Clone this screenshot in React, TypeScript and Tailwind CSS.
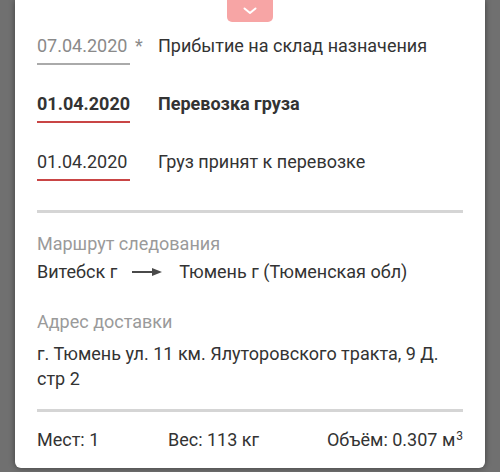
import React from 'react';

const events = [
  { date: '07.04.2020', mark: '*', title: 'Прибытие на склад назначения', state: 'pending' },
  { date: '01.04.2020', mark: '', title: 'Перевозка груза', state: 'current' },
  { date: '01.04.2020', mark: '', title: 'Груз принят к перевозке', state: 'done' },
];

function Arrow() {
  return (
    <svg width="30" height="10" viewBox="0 0 30 10" className="ml-[15px] mr-[17px]">
      <line x1="0" y1="5" x2="22" y2="5" stroke="#4a4a4a" strokeWidth="2" />
      <path d="M20 1 L30 5 L20 9 Z" fill="#4a4a4a" />
    </svg>
  );
}

export default function App() {
  return (
    <div
      className="w-[500px] h-[472px] overflow-hidden bg-[#707070] flex justify-center"
      style={{ fontFamily: 'Roboto, "Noto Sans", sans-serif' }}
    >
      <div className="w-[470px] h-[468px] bg-white rounded-b-[6px] shadow-[0_0_6px_rgba(0,0,0,0.45)] relative px-[22px] text-[#333] text-[18px] leading-[24px]">
        <button className="absolute left-[212px] top-0 w-[46px] h-[22px] bg-[#f7a5a5] rounded-b-[5px] flex items-center justify-center">
          <svg width="14" height="8" viewBox="0 0 14 8">
            <path d="M1.5 1.5 L7 6 L12.5 1.5" fill="none" stroke="white" strokeWidth="2" strokeLinecap="round" strokeLinejoin="round" />
          </svg>
        </button>

        <div className="pt-[34px] flex flex-col gap-[27px]">
          {events.map((e, i) => (
            <div key={i} className="flex items-start">
              <div className="w-[121px] shrink-0 flex items-start">
                <span
                  className={
                    'inline-block w-[93px] whitespace-nowrap pb-[5px] border-b-2 ' +
                    (e.state === 'pending'
                      ? 'text-[#8a8a8a] border-[#aaaaaa]'
                      : e.state === 'current'
                      ? 'font-bold text-[#333] border-[#c94545]'
                      : 'text-[#333] border-[#c94545]')
                  }
                >
                  {e.date}
                </span>
                {e.mark && <span className="ml-[5px] text-[#8a8a8a]">{e.mark}</span>}
              </div>
              <span className={'whitespace-nowrap ' + (e.state === 'current' ? 'font-bold' : '')}>{e.title}</span>
            </div>
          ))}
        </div>

        <div className="mt-[29px] h-[3px] bg-[#d5d5d5]" />

        <div className="mt-[19px]">
          <div className="text-[#9a9a9a]">Маршрут следования</div>
          <div className="mt-[4px] flex items-center">
            <span>Витебск г</span>
            <Arrow />
            <span>Тюмень г (Тюменская обл)</span>
          </div>
        </div>

        <div className="mt-[26px]">
          <div className="text-[#9a9a9a]">Адрес доставки</div>
          <div className="mt-[7px] leading-[25px]">
            г. Тюмень ул. 11 км. Ялуторовского тракта, 9 Д.
            <br />
            стр 2
          </div>
        </div>

        <div className="mt-[18px] h-[3px] bg-[#d5d5d5]" />

        <div className="mt-[16px] flex">
          <span className="w-[131px]">Мест: 1</span>
          <span>Вес: 113 кг</span>
          <span className="ml-auto">
            Объём: 0.307 м<sup className="text-[12px] leading-none ml-[1px]">3</sup>
          </span>
        </div>
      </div>
    </div>
  );
}
